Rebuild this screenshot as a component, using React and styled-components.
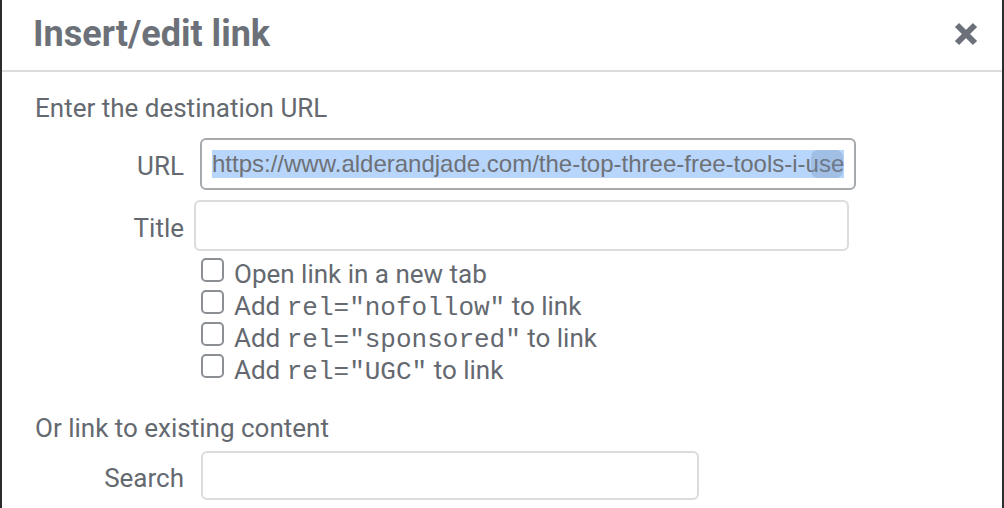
import React from "react";
import styled, { createGlobalStyle } from "styled-components";

const GlobalStyle = createGlobalStyle`
  html, body {
    margin: 0;
    padding: 0;
    background: #ffffff;
  }
  * {
    box-sizing: border-box;
  }
`;

const linkOptions = [
  { id: "new-tab", text: "Open link in a new tab" },
  { id: "nofollow", before: "Add ", code: 'rel="nofollow"', after: " to link" },
  { id: "sponsored", before: "Add ", code: 'rel="sponsored"', after: " to link" },
  { id: "ugc", before: "Add ", code: 'rel="UGC"', after: " to link" },
];

function CloseIcon() {
  return (
    <svg width="24" height="24" viewBox="0 0 24 24" aria-hidden="true">
      <path
        d="M3 3 L21 21 M21 3 L3 21"
        stroke="#6c7179"
        strokeWidth="6"
        strokeLinecap="butt"
        fill="none"
      />
    </svg>
  );
}

export default function App() {
  return (
    <>
      <GlobalStyle />
      <Dialog>
        <Header>
          <Title>Insert/edit link</Title>
          <CloseButton type="button" aria-label="Close">
            <CloseIcon />
          </CloseButton>
        </Header>

        <Body>
          <SectionTitle>Enter the destination URL</SectionTitle>

          <FieldRow $top={15}>
            <Label>URL</Label>
            <UrlField $offset={16} $width={656}>
              <Selected>https://www.alderandjade.com/the-top-three-free-tools-i-use</Selected>
              <ExtensionBadge />
            </UrlField>
          </FieldRow>

          <FieldRow $top={10}>
            <Label>Title</Label>
            <TextInput $offset={10} $width={655} $height={51} />
          </FieldRow>

          <OptionList>
            {linkOptions.map((opt) => (
              <Option key={opt.id}>
                <Checkbox />
                <span>
                  {opt.text}
                  {opt.before}
                  {opt.code && <Code>{opt.code}</Code>}
                  {opt.after}
                </span>
              </Option>
            ))}
          </OptionList>

          <SectionTitle $top={27}>Or link to existing content</SectionTitle>

          <FieldRow $top={8}>
            <Label>Search</Label>
            <TextInput $offset={17} $width={498} $height={49} />
          </FieldRow>
        </Body>
      </Dialog>
    </>
  );
}

// Styled Components
const Dialog = styled.div`
  height: 100vh;
  overflow: hidden;
  background: #ffffff;
  border-left: 2px solid #2c2c2c;
  border-right: 2px solid #2c2c2c;
  font-family: Roboto, "Liberation Sans", sans-serif;
  color: #646970;
`;

const Header = styled.div`
  height: 72px;
  display: flex;
  align-items: center;
  justify-content: space-between;
  padding: 0 24px 2px 31px;
  border-bottom: 2px solid #dcdcde;
`;

const Title = styled.h1`
  margin: 0;
  font-size: 36px;
  font-weight: 700;
  color: #6c7179;
  line-height: 1;
`;

const CloseButton = styled.button`
  display: flex;
  align-items: center;
  justify-content: center;
  padding: 0;
  border: 0;
  background: none;
  cursor: pointer;
`;

const Body = styled.div`
  padding: 21px 33px;
`;

const SectionTitle = styled.div`
  margin-top: ${(p) => p.$top || 0}px;
  font-size: 26px;
  line-height: 30px;
`;

const FieldRow = styled.div`
  display: grid;
  grid-template-columns: 149px auto;
  align-items: center;
  margin-top: ${(p) => p.$top || 0}px;
`;

const Label = styled.div`
  padding-top: 4px;
  text-align: right;
  font-size: 26px;
  line-height: 30px;
`;

const TextInput = styled.input`
  margin-left: ${(p) => p.$offset}px;
  width: ${(p) => p.$width}px;
  height: ${(p) => p.$height}px;
  border: 2px solid #dcdcde;
  border-radius: 6px;
  background: #ffffff;
  outline: none;
`;

const UrlField = styled.div`
  position: relative;
  margin-left: ${(p) => p.$offset}px;
  width: ${(p) => p.$width}px;
  height: 52px;
  display: flex;
  align-items: center;
  padding: 0 10px;
  border: 2px solid #a7aaad;
  border-radius: 6px;
  overflow: hidden;
  white-space: nowrap;
  font-family: "Liberation Sans", Arial, sans-serif;
  font-size: 24px;
  color: #6e7177;
`;

const Selected = styled.span`
  background: #b8d6fb;
  line-height: 28px;
`;

/* browser-extension button that sits over the end of the field */
const ExtensionBadge = styled.span`
  position: absolute;
  right: 11px;
  top: 10px;
  width: 32px;
  height: 28px;
  border-radius: 7px;
  background: rgba(110, 140, 180, 0.3);
`;

const OptionList = styled.div`
  margin: 7px 0 0 166px;
  display: flex;
  flex-direction: column;
`;

const Option = styled.label`
  display: flex;
  align-items: flex-start;
  gap: 10px;
  height: 32px;
  font-size: 26px;
  line-height: 32px;
`;

const Checkbox = styled.span`
  flex: none;
  width: 23px;
  height: 24px;
  border: 2px solid #8c8f94;
  border-radius: 5px;
`;

const Code = styled.code`
  font-family: "Liberation Mono", "Courier New", monospace;
  font-size: 26px;
`;
